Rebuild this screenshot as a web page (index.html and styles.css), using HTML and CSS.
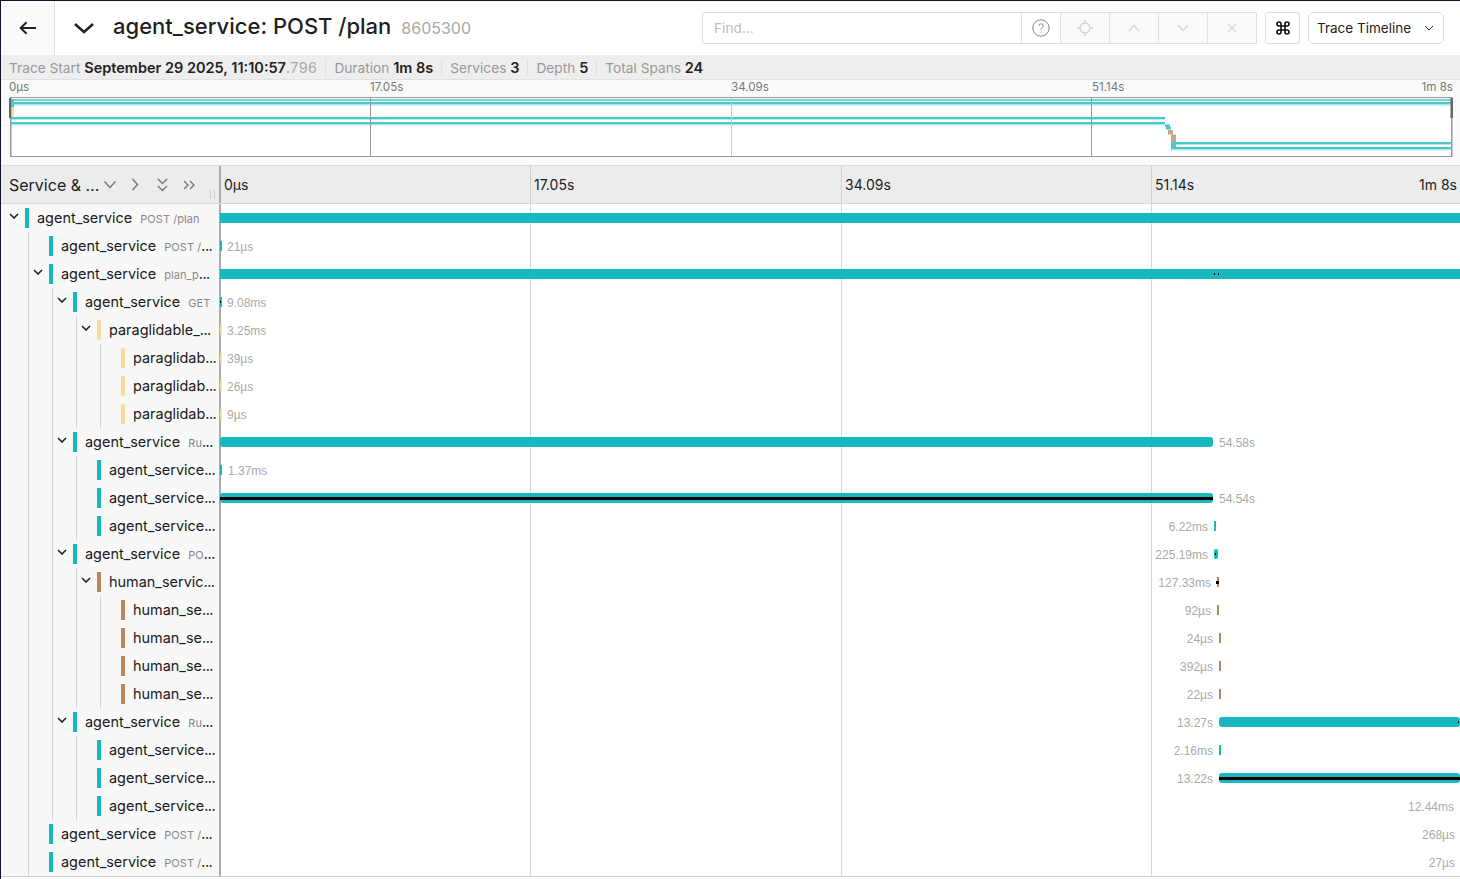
FILE: index.html
```html
<!DOCTYPE html>
<html lang="en">
<head>
<meta charset="utf-8">
<title>agent_service: POST /plan</title>
<link rel="stylesheet" href="styles.css">
</head>
<body>
<div class="app">
  <header class="topbar">
    <a class="back"><svg width="18" height="14" viewBox="0 0 18 14" class="ic-back"><path d="M17 7H2M7.5 1.2 1.7 7l5.8 5.8"/></svg></a>
    <svg class="ic-collapse" width="22" height="12" viewBox="0 0 22 12"><path d="M2 2l9 8 9-8"/></svg>
    <h1 class="title">agent_service: POST /plan</h1>
    <span class="trace-id">8605300</span>
    <div class="search">
      <span class="find">Find...</span>
      <span class="sb sb-help"><svg width="18" height="18" viewBox="0 0 18 18"><circle cx="9" cy="9" r="8.2"/><path d="M6.8 7a2.2 2.2 0 1 1 3.3 1.9c-.8.5-1.1.9-1.1 1.8M9 12.6v1"/></svg></span>
      <span class="sb sb-off"><svg width="16" height="16" viewBox="0 0 16 16"><circle cx="8" cy="8" r="5"/><path d="M8 0v3M8 13v3M0 8h3M13 8h3"/></svg></span>
      <span class="sb sb-off"><svg width="12" height="8" viewBox="0 0 12 8"><path d="M1 7l5-5.500 5 5.500"/></svg></span>
      <span class="sb sb-off"><svg width="12" height="8" viewBox="0 0 12 8"><path d="M1 1l5 5.500 5-5.500"/></svg></span>
      <span class="sb sb-off"><svg width="10" height="10" viewBox="0 0 10 10"><path d="M1 1l8 8M9 1l-8 8"/></svg></span>
    </div>
    <span class="cmd"><svg width="16" height="16" viewBox="0 0 24 24"><path d="M18 3a3 3 0 0 0-3 3v12a3 3 0 0 0 3 3 3 3 0 0 0 3-3 3 3 0 0 0-3-3H6a3 3 0 0 0-3 3 3 3 0 0 0 3 3 3 3 0 0 0 3-3V6a3 3 0 0 0-3-3 3 3 0 0 0-3 3 3 3 0 0 0 3 3h12a3 3 0 0 0 3-3 3 3 0 0 0-3-3z"/></svg></span>
    <span class="view">Trace Timeline<svg width="10" height="6" viewBox="0 0 10 6"><path d="M1 1l4 4 4-4"/></svg></span>
  </header>

  <div class="summary">
    <span class="meta">Trace Start <b>September 29 2025, 11:10:57</b><span class="ms">.796</span></span>
    <span class="meta">Duration <b>1m 8s</b></span>
    <span class="meta">Services <b>3</b></span>
    <span class="meta">Depth <b>5</b></span>
    <span class="meta">Total Spans <b>24</b></span>
  </div>

  <section class="minimap">
    <div class="mini-ticks"><span>0µs</span><span>17.05s</span><span>34.09s</span><span>51.14s</span><span class="mini-end">1m 8s</span></div>
    <svg class="mini-canvas" width="1444" height="60" viewBox="9 97 1444 60">
      <rect x="10" y="97" width="1442" height="60" fill="#fff"/>
      <g fill="#4ac9cd">
        <rect x="10" y="99" width="1442" height="2" fill="#6fd5d8"/>
        <rect x="10" y="102" width="1442" height="2.500"/>
        <rect x="10" y="104.500" width="1442" height="1" fill="#a8e6e8"/>
        <rect x="10" y="117" width="1155" height="2.400"/>
        <rect x="10" y="122" width="1155" height="2.400"/>
        <rect x="10" y="124.400" width="1155" height="1" fill="#a8e6e8"/>
        <rect x="1165" y="124.500" width="5" height="2.500"/>
        <rect x="1166" y="127" width="5" height="2.500"/>
        <rect x="1171" y="142" width="5" height="7"/>
        <rect x="1171" y="142" width="281" height="2.400"/>
        <rect x="1171" y="147" width="281" height="2.400"/>
        <rect x="1171" y="149.400" width="281" height="1" fill="#a8e6e8"/>
        <rect x="10" y="99" width="4" height="8"/>
      </g>
      <g fill="#cba582">
        <rect x="1168" y="130" width="5" height="4.500"/>
        <rect x="1171" y="134.500" width="5" height="7.500"/>
      </g>
      <rect x="11" y="107" width="3" height="10" fill="#f8dca1"/>
      <g fill="#999">
        <rect x="370" y="97" width="1" height="60"/>
        <rect x="731" y="97" width="1" height="60" fill="#ccc"/>
        <rect x="1091" y="97" width="1" height="60"/>
        <rect x="10" y="97" width="1442" height="1"/>
        <rect x="10" y="156" width="1442" height="1"/>
        <rect x="10" y="97" width="1.500" height="60"/>
        <rect x="1451" y="97" width="1.500" height="60"/>
      </g>
      <rect x="9" y="98" width="2" height="20" fill="#666"/>
      <rect x="1450.500" y="98" width="2.500" height="20" fill="#666"/>
    </svg>
  </section>

  <div class="col-head">
    <div class="col-name">
      <span class="col-title">Service &amp; ...</span>
      <svg class="ch1" width="14" height="9" viewBox="0 0 14 9"><path d="M1.500 1.500l5.500 6 5.500-6"/></svg>
      <svg class="ch2" width="8" height="13" viewBox="0 0 8 13"><path d="M1.500 1l5 5.500-5 5.500"/></svg>
      <svg class="ch3" width="11" height="14" viewBox="0 0 11 14"><path d="M1 1l4.500 4.500L10 1M1 8l4.500 4.500L10 8"/></svg>
      <svg class="ch4" width="13" height="10" viewBox="0 0 13 10"><path d="M1 1l4 4-4 4M7 1l4 4-4 4"/></svg>
      <span class="grip"></span>
    </div>
    <div class="col-ticks">
      <span>0µs</span><span>17.05s</span><span>34.09s</span><span>51.14s<em>1m 8s</em></span>
    </div>
  </div>

  <div class="body">
    <div class="grid"><span></span><span></span><span></span><span></span></div>

    <div class="row"><div class="name"><span class="tg"><svg width="10" height="6" viewBox="0 0 10 6"><path d="M1 1l4 4 4-4"/></svg></span><i class="sw teal"></i><span class="label">agent_service <small>POST /plan</small></span></div>
      <div class="tl"><span class="bar teal" style="left:-1px;width:1240px"></span></div></div>

    <div class="row"><div class="name"><i class="g"></i><span class="tg"></span><i class="sw teal"></i><span class="label">agent_service <small>POST /</small><span class="dots">...</span></span></div>
      <div class="tl"><span class="bar teal" style="left:-1px;width:2px"></span><span class="dur" style="left:6px">21µs</span></div></div>

    <div class="row"><div class="name"><i class="g"></i><span class="tg"><svg width="10" height="6" viewBox="0 0 10 6"><path d="M1 1l4 4 4-4"/></svg></span><i class="sw teal"></i><span class="label">agent_service <small>plan_p</small><span class="dots">...</span></span></div>
      <div class="tl"><span class="bar teal" style="left:-1px;width:1240px"><i class="mark" style="left:994px"></i><i class="mark" style="left:998px"></i></span></div></div>

    <div class="row"><div class="name"><i class="g"></i><i class="g"></i><span class="tg"><svg width="10" height="6" viewBox="0 0 10 6"><path d="M1 1l4 4 4-4"/></svg></span><i class="sw teal"></i><span class="label">agent_service <small>GET</small></span></div>
      <div class="tl"><span class="bar teal" style="left:-1px;width:2px"><i class="mark" style="left:0"></i></span><span class="dur" style="left:6px">9.08ms</span></div></div>

    <div class="row"><div class="name"><i class="g"></i><i class="g"></i><i class="g"></i><span class="tg"><svg width="10" height="6" viewBox="0 0 10 6"><path d="M1 1l4 4 4-4"/></svg></span><i class="sw sand"></i><span class="label">paraglidable_<span class="dots">...</span></span></div>
      <div class="tl"><span class="bar sand" style="left:-1px;width:2px"></span><span class="dur" style="left:6px">3.25ms</span></div></div>

    <div class="row"><div class="name"><i class="g"></i><i class="g"></i><i class="g"></i><i class="g"></i><span class="tg"></span><i class="sw sand"></i><span class="label">paraglidab<span class="dots">...</span></span></div>
      <div class="tl"><span class="bar sand" style="left:-1px;width:2px"></span><span class="dur" style="left:6px">39µs</span></div></div>

    <div class="row"><div class="name"><i class="g"></i><i class="g"></i><i class="g"></i><i class="g"></i><span class="tg"></span><i class="sw sand"></i><span class="label">paraglidab<span class="dots">...</span></span></div>
      <div class="tl"><span class="bar sand" style="left:-1px;width:2px"></span><span class="dur" style="left:6px">26µs</span></div></div>

    <div class="row"><div class="name"><i class="g"></i><i class="g"></i><i class="g"></i><i class="g"></i><span class="tg"></span><i class="sw sand"></i><span class="label">paraglidab<span class="dots">...</span></span></div>
      <div class="tl"><span class="bar sand" style="left:-1px;width:2px"></span><span class="dur" style="left:6px">9µs</span></div></div>

    <div class="row"><div class="name"><i class="g"></i><i class="g"></i><span class="tg"><svg width="10" height="6" viewBox="0 0 10 6"><path d="M1 1l4 4 4-4"/></svg></span><i class="sw teal"></i><span class="label">agent_service <small>Ru</small><span class="dots">...</span></span></div>
      <div class="tl"><span class="bar teal round" style="left:-1px;width:993px"></span><span class="dur" style="left:998px">54.58s</span></div></div>

    <div class="row"><div class="name"><i class="g"></i><i class="g"></i><i class="g"></i><span class="tg"></span><i class="sw teal"></i><span class="label">agent_service<span class="dots">...</span></span></div>
      <div class="tl"><span class="bar teal" style="left:-1px;width:2px"></span><span class="dur" style="left:7px">1.37ms</span></div></div>

    <div class="row"><div class="name"><i class="g"></i><i class="g"></i><i class="g"></i><span class="tg"></span><i class="sw teal"></i><span class="label">agent_service<span class="dots">...</span></span></div>
      <div class="tl"><span class="bar teal round" style="left:-1px;width:993px"><i class="core"></i></span><span class="dur" style="left:998px">54.54s</span></div></div>

    <div class="row"><div class="name"><i class="g"></i><i class="g"></i><i class="g"></i><span class="tg"></span><i class="sw teal"></i><span class="label">agent_service<span class="dots">...</span></span></div>
      <div class="tl"><span class="bar teal" style="left:993px;width:2px"></span><span class="dur" style="right:252px">6.22ms</span></div></div>

    <div class="row"><div class="name"><i class="g"></i><i class="g"></i><span class="tg"><svg width="10" height="6" viewBox="0 0 10 6"><path d="M1 1l4 4 4-4"/></svg></span><i class="sw teal"></i><span class="label">agent_service <small>PO</small><span class="dots">...</span></span></div>
      <div class="tl"><span class="bar teal round" style="left:993px;width:4px"><i class="mark" style="left:1px"></i></span><span class="dur" style="right:252px">225.19ms</span></div></div>

    <div class="row"><div class="name"><i class="g"></i><i class="g"></i><i class="g"></i><span class="tg"><svg width="10" height="6" viewBox="0 0 10 6"><path d="M1 1l4 4 4-4"/></svg></span><i class="sw tan"></i><span class="label">human_servic<span class="dots">...</span></span></div>
      <div class="tl"><span class="bar tan" style="left:996px;width:2px"><i class="mark wide" style="left:-1px"></i></span><span class="dur" style="right:249px">127.33ms</span></div></div>

    <div class="row"><div class="name"><i class="g"></i><i class="g"></i><i class="g"></i><i class="g"></i><span class="tg"></span><i class="sw tan"></i><span class="label">human_se<span class="dots">...</span></span></div>
      <div class="tl"><span class="bar tan" style="left:996px;width:2px"></span><span class="dur" style="right:249px">92µs</span></div></div>

    <div class="row"><div class="name"><i class="g"></i><i class="g"></i><i class="g"></i><i class="g"></i><span class="tg"></span><i class="sw tan"></i><span class="label">human_se<span class="dots">...</span></span></div>
      <div class="tl"><span class="bar tan" style="left:998px;width:2px"></span><span class="dur" style="right:247px">24µs</span></div></div>

    <div class="row"><div class="name"><i class="g"></i><i class="g"></i><i class="g"></i><i class="g"></i><span class="tg"></span><i class="sw tan"></i><span class="label">human_se<span class="dots">...</span></span></div>
      <div class="tl"><span class="bar tan" style="left:998px;width:2px"></span><span class="dur" style="right:247px">392µs</span></div></div>

    <div class="row"><div class="name"><i class="g"></i><i class="g"></i><i class="g"></i><i class="g"></i><span class="tg"></span><i class="sw tan"></i><span class="label">human_se<span class="dots">...</span></span></div>
      <div class="tl"><span class="bar tan" style="left:998px;width:2px"></span><span class="dur" style="right:247px">22µs</span></div></div>

    <div class="row"><div class="name"><i class="g"></i><i class="g"></i><span class="tg"><svg width="10" height="6" viewBox="0 0 10 6"><path d="M1 1l4 4 4-4"/></svg></span><i class="sw teal"></i><span class="label">agent_service <small>Ru</small><span class="dots">...</span></span></div>
      <div class="tl"><span class="bar teal round" style="left:998px;width:241px"><i class="mark" style="left:239px"></i></span><span class="dur" style="right:247px">13.27s</span></div></div>

    <div class="row"><div class="name"><i class="g"></i><i class="g"></i><i class="g"></i><span class="tg"></span><i class="sw teal"></i><span class="label">agent_service<span class="dots">...</span></span></div>
      <div class="tl"><span class="bar teal" style="left:998px;width:2px"></span><span class="dur" style="right:247px">2.16ms</span></div></div>

    <div class="row"><div class="name"><i class="g"></i><i class="g"></i><i class="g"></i><span class="tg"></span><i class="sw teal"></i><span class="label">agent_service<span class="dots">...</span></span></div>
      <div class="tl"><span class="bar teal round" style="left:998px;width:241px"><i class="core"></i></span><span class="dur" style="right:247px">13.22s</span></div></div>

    <div class="row"><div class="name"><i class="g"></i><i class="g"></i><i class="g"></i><span class="tg"></span><i class="sw teal"></i><span class="label">agent_service<span class="dots">...</span></span></div>
      <div class="tl"><span class="dur" style="right:6px">12.44ms</span></div></div>

    <div class="row"><div class="name"><i class="g"></i><span class="tg"></span><i class="sw teal"></i><span class="label">agent_service <small>POST /</small><span class="dots">...</span></span></div>
      <div class="tl"><span class="dur" style="right:5px">268µs</span></div></div>

    <div class="row"><div class="name"><i class="g"></i><span class="tg"></span><i class="sw teal"></i><span class="label">agent_service <small>POST /</small><span class="dots">...</span></span></div>
      <div class="tl"><span class="dur" style="right:5px">27µs</span></div></div>
  </div>
  <div class="foot"></div>
</div>
</body>
</html>
```
FILE: styles.css
```css
* { box-sizing: border-box; }
html, body { margin: 0; padding: 0; height: 100%; background: #fff; overflow: hidden; }
body { font-family: Inter, "Liberation Sans", sans-serif; color: #1f1f1f; }
.app { height: 879px; border-top: 1px solid #15152a; border-left: 1px solid #15152a; display: flex; flex-direction: column; }
svg { fill: none; stroke: currentColor; display: block; }

.topbar { height: 54px; display: flex; align-items: center; flex: none; padding-right: 16px; }
.back { width: 54px; height: 54px; flex: none; background: #fafafa; border-right: 1px solid #e4e4e4; display: flex; align-items: center; justify-content: center; color: #222; }
.ic-back { stroke-width: 2; }
.ic-collapse { margin-left: 18px; color: #222; stroke-width: 2.6; flex: none; }
.title { margin: 0 0 4px 18px; font-size: 22px; font-weight: 500; line-height: 30px; white-space: nowrap; }
.trace-id { margin-left: 10px; font-size: 16px; color: #a8a8a8; white-space: nowrap; }
.search { margin-left: auto; width: 555px; height: 32px; display: flex; border: 1px solid #dedede; border-radius: 2px; flex: none; }
.find { flex: 1; padding-left: 11px; font-size: 13.7px; line-height: 30px; color: #bdbdbd; }
.sb { width: 49px; border-left: 1px solid #e2e2e2; display: flex; align-items: center; justify-content: center; background: #fafafa; }
.sb-help { width: 39px; background: #fff; color: #888; }
.sb-off { color: #d4d4d4; stroke-width: 1.3; }
.cmd { width: 35px; height: 32px; margin-left: 8px; flex: none; border: 1px solid #dedede; border-radius: 3px; display: flex; align-items: center; justify-content: center; color: #111; stroke-width: 2.4; }
.view { width: 136px; height: 32px; margin-left: 8px; flex: none; border: 1px solid #dedede; border-radius: 6px; display: flex; align-items: center; justify-content: space-between; padding: 0 9px 0 8px; font-size: 13.5px; color: #222; }

.summary { height: 25px; flex: none; background: #eee; padding-left: 8px; display: flex; align-items: center; font-size: 13.7px; color: #999; white-space: nowrap; border-bottom: 1px solid #e2e2e2; }
.summary b { color: #222; font-weight: 600; font-size: 14.5px; }
.ms { font-size: 14.4px; letter-spacing: .4px; color: #aaa; }
.meta + .meta { margin-left: 8px; padding-left: 8px; border-left: 1px solid #e0e0e0; }

.minimap { height: 86px; flex: none; background: #fafafa; border-bottom: 1px solid #ddd; padding-left: 8px; }
.mini-ticks { height: 17px; width: 1444px; display: flex; font-size: 11.6px; line-height: 14px; color: #777; position: relative; }
.mini-ticks span { width: 361px; }
.mini-ticks .mini-end { position: absolute; right: 0; width: auto; }
.mini-canvas { stroke: none; }

.col-head { height: 38px; flex: none; display: flex; background: #ececec; border-bottom: 1px solid #d8d8d8; }
.col-name { width: 220px; flex: none; display: flex; align-items: center; padding-left: 8px; position: relative; border-right: 2px solid #aaa; color: #777; }
.col-title { font-size: 16px; color: #222; white-space: nowrap; width: 94px; }
.col-name svg { stroke-width: 1.4; flex: none; }
.ch2 { margin-left: 14px; }
.ch3 { margin-left: 18px; }
.ch4 { margin-left: 15px; }
.grip { position: absolute; right: 4px; bottom: 4px; width: 5px; height: 9px; border-left: 1px solid #d0d0d0; border-right: 1px solid #d0d0d0; }
.col-ticks { flex: 1; display: grid; grid-template-columns: 309px 311px 310px 1fr; font-size: 14px; color: #222; line-height: 37px; }
.col-ticks span { padding-left: 3px; position: relative; border-left: 1px solid #d0d0d0; }
.col-ticks span:first-child { border-left: 0; }
.col-ticks em { position: absolute; right: 3px; font-style: normal; }

.body { position: relative; flex: none; }
.grid { position: absolute; left: 220px; top: 0; right: 0; bottom: 0; display: grid; grid-template-columns: 309px 311px 310px 1fr; }
.grid span { border-left: 1px solid #d8d8d8; }
.grid span:first-child { border-left: 0; }

.row { height: 28px; display: flex; position: relative; }
.name { width: 220px; flex: none; display: flex; align-items: center; padding-left: 4px; background: #f8f8f8; border-right: 2px solid #aaa; }
.g { width: 24px; height: 28px; flex: none; border-right: 1px solid #d4d4d4; }
.tg { width: 20px; flex: none; display: flex; justify-content: center; color: #222; padding-right: 2px; margin-bottom: 5px; }
.tg svg { stroke-width: 1.6; }
.sw { width: 4px; height: 20px; flex: none; margin-right: 8px; }
.teal { background: #17b8be; }
.sand { background: #f8dca1; }
.tan { background: #b7885e; }
.label { flex: 1; min-width: 0; white-space: nowrap; font-size: 14.45px; line-height: 20px; color: #1a1a1a; }
.label small { font-size: 11px; color: #888; margin-left: 4px; letter-spacing: .05px; }
.dots { letter-spacing: -.5px; }
.tl { flex: 1; position: relative; }
.bar { position: absolute; top: 9px; height: 10px; z-index: 1; }
.round { border-radius: 3px; }
.mark { position: absolute; top: 4px; width: 1px; height: 2px; background: #000; }
.mark.wide { width: 3px; height: 3px; }
.core { position: absolute; left: 0; right: 0; top: 4px; height: 3px; background: #000; }
.dur { position: absolute; top: 0; font-family: "Liberation Sans", Arial, sans-serif; font-size: 12px; line-height: 31px; color: #aaa; white-space: nowrap; }
.foot { height: 1px; border-top: 1px solid #ccc; flex: none; }
```
